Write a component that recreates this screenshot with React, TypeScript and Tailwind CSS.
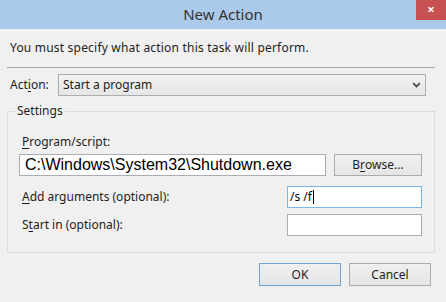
import { ReactNode } from "react";

const ui = "font-['Noto_Sans','Open_Sans',sans-serif] text-[12px] text-[#1e1e1e]";

function Key({ children }: { children: ReactNode }) {
  return <span className="underline underline-offset-2">{children}</span>;
}

function Field({ className, children }: { className?: string; children?: ReactNode }) {
  return (
    <div
      className={`flex h-[22px] items-center border bg-white ${className ?? "border-[#abadb3]"}`}
    >
      {children}
    </div>
  );
}

function Button({ children, primary, className }: { children: ReactNode; primary?: boolean; className?: string }) {
  return (
    <div
      className={`flex items-center justify-center border bg-gradient-to-b from-[#f0f0f0] to-[#e5e5e5] ${
        primary ? "border-[#6ea2cf]" : "border-[#acacac]"
      } ${className ?? "h-[23px] w-[82px]"}`}
    >
      {children}
    </div>
  );
}

export default function App() {
  return (
    <div className={`flex h-[302px] w-[446px] flex-col bg-[#f0f0f0] ${ui}`}>
      <div className="relative flex h-[29px] shrink-0 items-center justify-center bg-[#abc9e8] text-[15px] text-[#333]">
        New Action
        <div className="absolute right-0 top-0 flex h-[20px] w-[30px] items-center justify-center bg-[#c75050] text-[13px] font-bold text-white">
          ×
        </div>
      </div>

      <div className="flex flex-col px-[7px]">
        <p className="mt-[11px] pl-[3px] leading-[16px] tracking-[0.2px]">
          You must specify what action this task will perform.
        </p>
        <div className="mt-[11px] h-px w-[428px] bg-[#a8a8a8]" />

        <div className="mt-[6px] flex items-center">
          <span className="w-[51px] pl-[3px]">
            Act<Key>i</Key>on:
          </span>
          <div className="flex h-[22px] w-[368px] items-center justify-between border border-[#acacac] bg-gradient-to-b from-[#f2f2f2] to-[#e6e6e6] pl-[4px] pr-[4px]">
            Start a program
            <svg width="9" height="6" viewBox="0 0 9 6">
              <path d="M1.2 1.2l3.3 3.3 3.3-3.3" fill="none" stroke="#444" strokeWidth="1.7" />
            </svg>
          </div>
        </div>

        <fieldset className="mt-[7px] h-[150px] w-[428px] border border-[#dcdcdc] p-0">
          <legend className="ml-[7px] px-[2px] leading-[16px]">Settings</legend>
          <div className="flex flex-col px-[11px]">
            <div className="mt-[15px] pl-[3px] leading-[16px]">
              <Key>P</Key>rogram/script:
            </div>
            <div className="mt-[4px] flex items-center gap-[8px]">
              <Field className="w-[307px] border-[#abadb3]">
                <span className="pl-[5px] font-['Liberation_Sans',Arial,sans-serif] text-[16px] text-black">
                  C:\Windows\System32\Shutdown.exe
                </span>
              </Field>
              <Button className="h-[22px] w-[88px]">
                B<Key>r</Key>owse...
              </Button>
            </div>
            <div className="mt-[10px] flex items-center justify-between pr-[1px]">
              <span className="pl-[3px]">
                <Key>A</Key>dd arguments (optional):
              </span>
              <Field className="w-[135px] border-[#7eb4ea]">
                <span className="pl-[2px] text-black">/s /f</span>
                <span className="ml-px h-[14px] w-px bg-black" />
              </Field>
            </div>
            <div className="mt-[6px] flex items-center justify-between pr-[1px]">
              <span className="pl-[3px]">
                S<Key>t</Key>art in (optional):
              </span>
              <Field className="w-[135px] border-[#abadb3]" />
            </div>
          </div>
        </fieldset>

        <div className="mt-[10px] flex justify-end gap-[8px] pr-[8px]">
          <Button primary>OK</Button>
          <Button>Cancel</Button>
        </div>
      </div>
    </div>
  );
}
